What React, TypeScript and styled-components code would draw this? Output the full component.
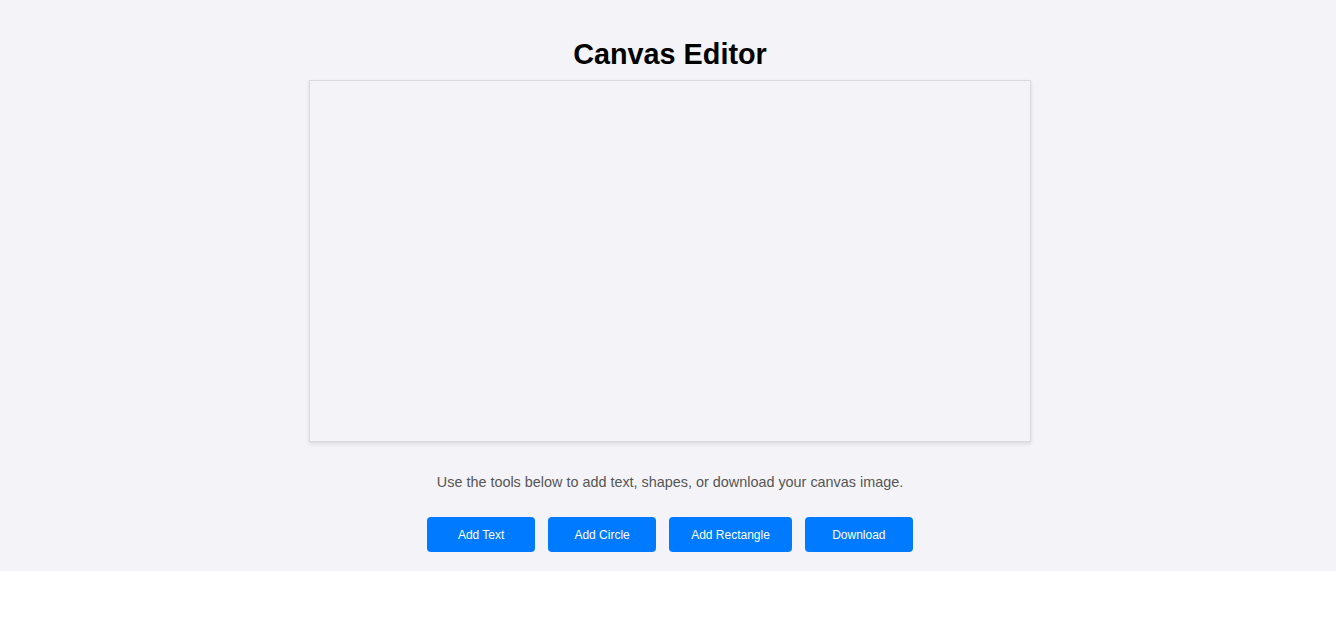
import React from "react";
import styled, { createGlobalStyle } from "styled-components";

const Global = createGlobalStyle`
  html, body { margin: 0; padding: 0; background: #ffffff; }
  body { font-family: "Liberation Sans", Arial, sans-serif; }
`;

const Page = styled.div`
  background: #f4f4f8;
  display: flex;
  flex-direction: column;
  align-items: center;
  padding: 38px 18px 19px 22px;
`;

const Title = styled.h1`
  margin: 0 0 10px;
  font-size: 28.8px;
  line-height: 32px;
  font-weight: bold;
  color: #000;
`;

const CanvasBox = styled.div`
  width: 720px;
  height: 360px;
  border: 1px solid #d9d9de;
  background: #f4f4f8;
  box-shadow: 0 2px 4px rgba(0, 0, 0, 0.1);
`;

const Hint = styled.p`
  margin: 32px 0 0;
  font-size: 14.4px;
  line-height: 17px;
  color: #555;
`;

const Toolbar = styled.div`
  display: flex;
  gap: 13px;
  margin-top: 26px;
`;

const Button = styled.button`
  min-width: 108px;
  height: 35px;
  padding: 0 22px;
  border: none;
  border-radius: 4px;
  background: #007bff;
  color: #fff;
  font-family: "Liberation Sans", Arial, sans-serif;
  font-size: 12px;
  cursor: pointer;
`;

export default function App() {
  return (
    <>
      <Global />
      <Page>
        <Title>Canvas Editor</Title>
        <CanvasBox />
        <Hint>Use the tools below to add text, shapes, or download your canvas image.</Hint>
        <Toolbar>
          <Button>Add Text</Button>
          <Button>Add Circle</Button>
          <Button>Add Rectangle</Button>
          <Button>Download</Button>
        </Toolbar>
      </Page>
    </>
  );
}
